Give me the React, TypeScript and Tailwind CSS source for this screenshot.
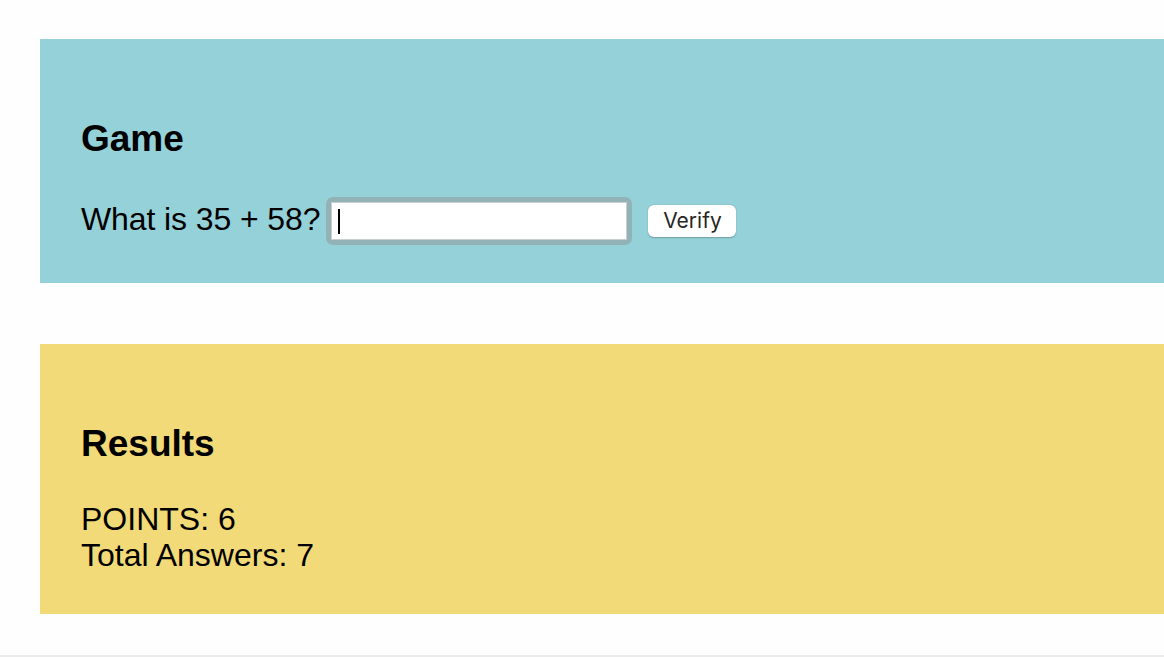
import React from "react";

export default function App() {
  return (
    <div className="h-[657px] w-[1164px] overflow-hidden bg-[#fefefe] border-b-2 border-[#ebebeb] box-border font-['Liberation_Sans',Arial,sans-serif] text-black">
      <div className="pt-[39px] pl-[40px] flex flex-col gap-[61px]">
        <section className="bg-[#95d1d8] pt-[79px] pb-[38px] pl-[41px]">
          <h2 className="text-[37px] leading-[42px] font-bold">Game</h2>
          <div className="mt-[36px] flex items-center h-[49px]">
            <span className="text-[32px] leading-[36px] mb-[4px] tracking-[-0.1px]">What is 35 + 58?</span>
            <div className="relative ml-[6px] rounded-[7px] bg-[#93b2b6] p-[5px]">
              <input
                type="text"
                aria-label="answer"
                className="block w-[296px] h-[38px] bg-white border border-[#c9cfd0] outline-none caret-transparent"
              />
              <span className="absolute left-[12px] top-[12px] w-[2px] h-[25px] bg-black" />
            </div>
            <button className="ml-[16px] h-[32px] w-[88px] rounded-[6px] bg-white text-[21px] leading-none text-[#262626] font-['Inter',sans-serif] shadow-[0_0.5px_1.5px_rgba(0,0,0,0.25)]">
              Verify
            </button>
          </div>
        </section>
        <section className="bg-[#f2da78] pt-[79px] pb-[41px] pl-[41px]">
          <h2 className="text-[37px] leading-[42px] font-bold">Results</h2>
          <div className="mt-[36px] text-[32px] leading-[36px]">
            <div>POINTS: 6</div>
            <div>Total Answers: 7</div>
          </div>
        </section>
      </div>
    </div>
  );
}
